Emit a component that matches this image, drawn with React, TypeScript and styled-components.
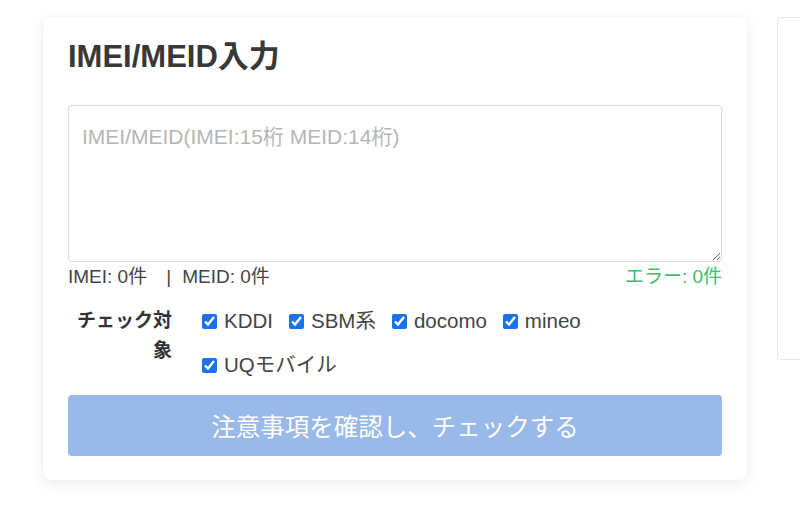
import React, { useState } from 'react';
import styled, { createGlobalStyle } from 'styled-components';

const GlobalStyle = createGlobalStyle`
  html, body {
    margin: 0;
    padding: 0;
    background: #ffffff;
  }
  body {
    font-family: "Liberation Sans", "Noto Sans CJK JP", sans-serif;
    color: #333333;
  }
`;

const Page = styled.div`
  display: flex;
  align-items: flex-start;
  gap: 30px;
  padding: 17px 0 0 43px;
  width: 800px;
  height: 514px;
  box-sizing: border-box;
  overflow: hidden;
`;

const Card = styled.section`
  flex: 0 0 704px;
  box-sizing: border-box;
  background: #fff;
  border-radius: 8px;
  box-shadow: 0 4px 16px rgba(0, 0, 0, 0.08), 0 0 2px rgba(0, 0, 0, 0.04);
  padding: 22px 25px 24px;
`;

const SideCard = styled.aside`
  flex: 0 0 120px;
  height: 343px;
  box-sizing: border-box;
  border: 1px solid #e6e6e6;
  border-radius: 4px;
  background: #fff;
`;

const Title = styled.h2`
  margin: 0 0 30px;
  font-size: 31px;
  font-weight: 700;
  line-height: 36px;
  color: #383838;
`;

const TextArea = styled.textarea`
  display: block;
  width: 100%;
  height: 157px;
  box-sizing: border-box;
  border: 1px solid #d9d9d9;
  border-radius: 4px;
  padding: 14px 13px;
  font-family: inherit;
  font-size: 21px;
  color: #333;
  resize: vertical;
  outline: none;

  &::placeholder {
    color: #b5b5b5;
  }
`;

const CountRow = styled.div`
  display: flex;
  justify-content: space-between;
  margin-top: 3px;
  font-size: 19px;
  line-height: 24px;
`;

const Count = styled.span<{ $error?: boolean }>`
  color: ${({ $error }) => ($error ? '#3dbd6b' : '#444')};
`;

const Separator = styled.span`
  margin: 0 11px 0 19px;
`;

const TargetRow = styled.div`
  display: flex;
  gap: 30px;
  margin-top: 17px;
`;

const TargetLabel = styled.div`
  flex: 0 0 104px;
  text-align: right;
  font-size: 19px;
  font-weight: 700;
  line-height: 30px;
  color: #333;
`;

const Options = styled.div`
  display: flex;
  flex-wrap: wrap;
  column-gap: 16px;
  row-gap: 14px;
  width: 400px;
`;

const Option = styled.label`
  display: flex;
  align-items: center;
  gap: 7px;
  font-size: 20.5px;
  line-height: 30px;
  color: #444;

  input {
    margin: 0;
    width: 15px;
    height: 15px;
    accent-color: #1a73e8;
  }
`;

const SubmitButton = styled.button`
  display: block;
  width: 100%;
  height: 61px;
  margin-top: 15px;
  border: none;
  border-radius: 4px;
  background: #99b9e9;
  color: #fff;
  font-family: "Noto Sans CJK JP", sans-serif;
  font-size: 24.5px;
  cursor: not-allowed;
`;

const carriers = ['KDDI', 'SBM系', 'docomo', 'mineo', 'UQモバイル'];

export default function App() {
  const [checked, setChecked] = useState<Record<string, boolean>>(
    Object.fromEntries(carriers.map((c) => [c, true]))
  );

  return (
    <>
      <GlobalStyle />
      <Page>
        <Card>
          <Title>IMEI/MEID入力</Title>
          <TextArea placeholder="IMEI/MEID(IMEI:15桁 MEID:14桁)" />
          <CountRow>
            <Count>
              IMEI: 0件<Separator>|</Separator>MEID: 0件
            </Count>
            <Count $error>エラー: 0件</Count>
          </CountRow>
          <TargetRow>
            <TargetLabel>チェック対象</TargetLabel>
            <Options>
              {carriers.map((c) => (
                <Option key={c}>
                  <input
                    type="checkbox"
                    checked={checked[c]}
                    onChange={() => setChecked({ ...checked, [c]: !checked[c] })}
                  />
                  {c}
                </Option>
              ))}
            </Options>
          </TargetRow>
          <SubmitButton disabled>注意事項を確認し、チェックする</SubmitButton>
        </Card>
        <SideCard />
      </Page>
    </>
  );
}
